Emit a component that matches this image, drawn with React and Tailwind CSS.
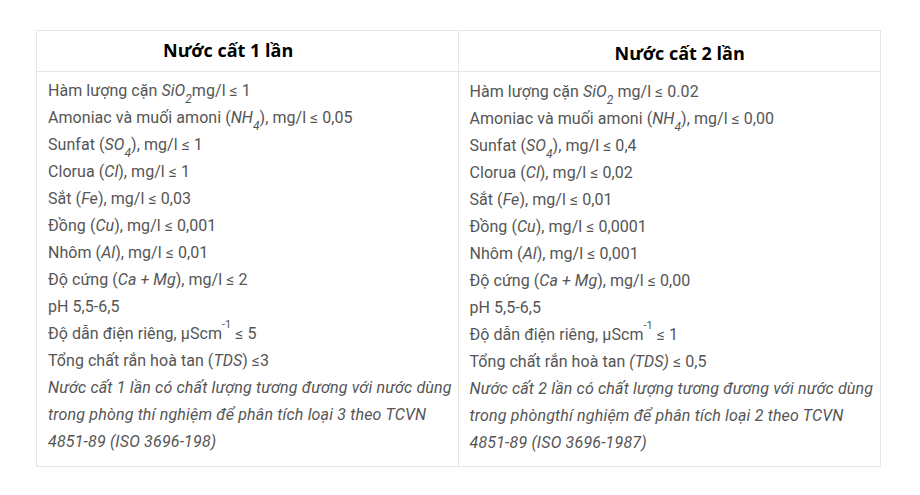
import React from "react";

const I = ({ children }) => <i className="italic">{children}</i>;
const Sub = ({ children }) => <sub className="text-[12px] align-[-4px] leading-none">{children}</sub>;
const Sup = ({ children }) => <sup className="text-[11px] align-[6px] leading-none">{children}</sup>;

const left = [
  <>Hàm lượng cặn <I>SiO<Sub>2</Sub></I>mg/l ≤ 1</>,
  <>Amoniac và muối amoni (<I>NH<Sub>4</Sub></I>), mg/l ≤ 0,05</>,
  <>Sunfat (<I>SO<Sub>4</Sub></I>), mg/l ≤ 1</>,
  <>Clorua (<I>Cl</I>), mg/l ≤ 1</>,
  <>Sắt (<I>Fe</I>), mg/l ≤ 0,03</>,
  <>Đồng (<I>Cu</I>), mg/l ≤ 0,001</>,
  <>Nhôm (<I>Al</I>), mg/l ≤ 0,01</>,
  <>Độ cứng (<I>Ca + Mg</I>), mg/l ≤ 2</>,
  <>pH 5,5-6,5</>,
  <>Độ dẫn điện riêng, µScm<Sup>-1</Sup> ≤ 5</>,
  <>Tổng chất rắn hoà tan (<I>TDS</I>) ≤3</>,
];

const right = [
  <>Hàm lượng cặn <I>SiO<Sub>2</Sub></I> mg/l ≤ 0.02</>,
  <>Amoniac và muối amoni (<I>NH<Sub>4</Sub></I>), mg/l ≤ 0,00</>,
  <>Sunfat (<I>SO<Sub>4</Sub></I>), mg/l ≤ 0,4</>,
  <>Clorua (<I>Cl</I>), mg/l ≤ 0,02</>,
  <>Sắt (<I>Fe</I>), mg/l ≤ 0,01</>,
  <>Đồng (<I>Cu</I>), mg/l ≤ 0,0001</>,
  <>Nhôm (<I>Al</I>), mg/l ≤ 0,001</>,
  <>Độ cứng (<I>Ca + Mg</I>), mg/l ≤ 0,00</>,
  <>pH 5,5-6,5</>,
  <>Độ dẫn điện riêng, µScm<Sup>-1</Sup> ≤ 1</>,
  <>Tổng chất rắn hoà tan <I>(TDS)</I> ≤ 0,5</>,
];

const App = () => {
  return (
    <div className="w-[920px] h-[495px] bg-white pt-[30px] pl-[36px]">
      <div className="w-[845px] grid grid-cols-2 border border-[#e6e6e6] text-[16px] leading-[27px] text-[#555555] font-['Roboto',sans-serif] tracking-[0.05px]">
        <div className="h-[41px] border-r border-b border-[#e6e6e6] pl-[126px] pt-[7px] font-['Open_Sans',sans-serif] font-bold text-[18px] leading-[24px] text-black tracking-normal">
          Nước cất 1 lần
        </div>
        <div className="h-[41px] border-b border-[#e6e6e6] pl-[156px] pt-[10px] font-['Open_Sans',sans-serif] font-bold text-[18px] leading-[24px] text-black tracking-normal">
          Nước cất 2 lần
        </div>
        <div className="border-r border-[#e6e6e6] pl-[11px] pr-[2px] pt-[5px] pb-[10px]">
          {left.map((l, i) => (
            <p key={i}>{l}</p>
          ))}
          <p className="italic tracking-[0.17px]">
            Nước cất 1 lần có chất lượng tương đương với nước dùng trong phòng thí nghiệm để phân tích loại 3 theo TCVN 4851-89 (ISO 3696-198)
          </p>
        </div>
        <div className="pl-[11px] pr-[2px] pt-[6px] pb-[10px]">
          {right.map((l, i) => (
            <p key={i}>{l}</p>
          ))}
          <p className="italic tracking-[0.17px]">
            Nước cất 2 lần có chất lượng tương đương với nước dùng trong phòngthí nghiệm để phân tích loại 2 theo TCVN 4851-89 (ISO 3696-1987)
          </p>
        </div>
      </div>
    </div>
  );
};

export default App;
